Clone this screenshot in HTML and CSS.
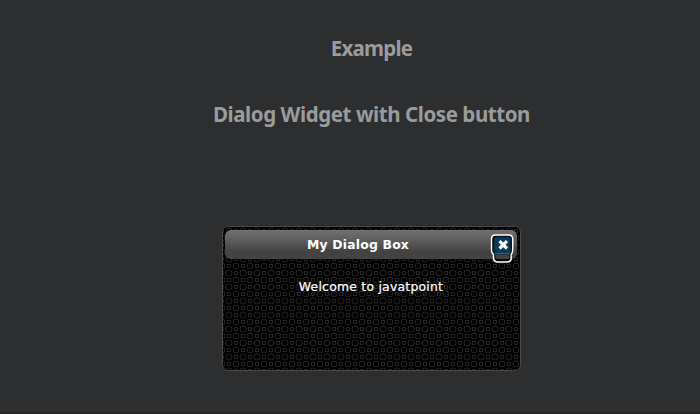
FILE: index.html
```
<!DOCTYPE html>
<html lang="en">
<head>
<meta charset="utf-8">
<title>Dialog Widget</title>
<link rel="stylesheet" href="styles.css">
</head>
<body>
<main class="page">
  <h1 class="heading"><span class="example">Example</span></h1>
  <h2 class="heading subtitle"><span class="widget-title">Dialog Widget with Close button</span></h2>
  <section class="dialog" role="dialog">
    <svg class="pattern" width="297" height="143" aria-hidden="true">
      <defs>
        <pattern id="loop" width="14" height="14" patternUnits="userSpaceOnUse" x="2" y="0">
          <g fill="none" stroke="#222" stroke-width="1">
            <circle cx="4" cy="4" r="3"/>
            <rect x="9.500" y="2.500" width="3" height="3"/>
            <rect x="2.500" y="9.500" width="3" height="3"/>
            <circle cx="11" cy="11" r="3"/>
          </g>
        </pattern>
      </defs>
      <rect width="297" height="143" fill="url(#loop)"/>
    </svg>
    <header class="titlebar">
      <span class="title">My Dialog Box</span>
      <button class="close" aria-label="Close">
        <svg width="24" height="30" viewBox="0 0 24 30">
          <path d="M5.500 1H18.500Q22.700 1 22.700 5V16Q22.700 19 21.200 20.500V23.500Q21.200 28 17 28H8Q3.500 28 3.500 23.500V20.500Q1.500 19 1.500 16V5Q1.500 1 5.500 1Z" fill="#080808" stroke="#fff" stroke-width="1.500"/>
          <rect x="5.500" y="20" width="14" height="5" rx="1.500" fill="#424242"/>
          <rect x="4" y="3" width="16.500" height="17" rx="2.500" fill="#073b58" stroke="#06263a"/>
          <path d="M5 19.500H20" stroke="#096ca8"/>
          <path d="M9.500 7.200L17 14.500M17 7.200L9.500 14.500" stroke="#fff" stroke-width="3.200"/>
        </svg>
      </button>
    </header>
    <p class="message"><span class="message-text">Welcome to javatpoint</span></p>
  </section>
</main>
</body>
</html>
```
FILE: styles.css
```
* { box-sizing: border-box; }
body {
  margin: 0;
  background: #2d2e30;
  font-family: "DejaVu Sans", sans-serif;
}
.page {
  height: 414px;
  padding: 34px 0 0 43px;
  border-bottom: 2px solid #2b2628;
  display: flex;
  flex-direction: column;
  align-items: center;
}
.heading {
  margin: 0;
  color: #9b9b9b;
  font: bold 20.5px/28px "Noto Sans", sans-serif;
  letter-spacing: -0.43px;
  white-space: nowrap;
}
.example { letter-spacing: -0.75px; }
.subtitle { margin-top: 38px; }
.dialog {
  position: relative;
  width: 299px;
  height: 145px;
  margin-top: 98px;
  padding: 3px 3px 3px 2px;
  border: 1px solid #484848;
  border-radius: 6px;
  background: #000;
  overflow: hidden;
}
.pattern { position: absolute; inset: 0; }
.titlebar {
  position: relative;
  height: 29px;
  padding-right: 26px;
  display: flex;
  align-items: center;
  justify-content: center;
  border-radius: 6px;
  background: linear-gradient(#727272, #555 48%, #424242 75%, #444);
}
.title {
  color: #fff;
  font-size: 12.4px;
  line-height: 18px;
  font-weight: bold;
  letter-spacing: 0.2px;
  white-space: nowrap;
}
.close {
  position: absolute;
  right: 3px;
  top: 4px;
  width: 24px;
  height: 30px;
  padding: 0;
  border: 0;
  background: none;
}
.close svg { display: block; }
.message {
  position: relative;
  margin: 19px 0 0;
  color: #fff;
  font-size: 12.4px;
  line-height: 18px;
  letter-spacing: 0.24px;
  text-align: center;
  white-space: nowrap;
  -webkit-text-stroke: 0.2px #fff;
}
```
